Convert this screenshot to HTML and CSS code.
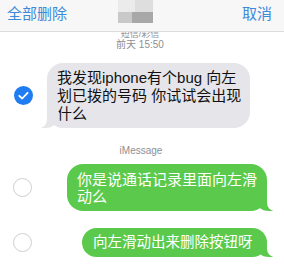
FILE: index.html
```html
<!DOCTYPE html>
<html lang="zh">
 <head>
  <meta charset="UTF-8">
  <meta name="viewport" content="width=device-width, initial-scale=1.0">
  <title>短信</title>
  <link rel="stylesheet" href="styles.css">
 </head>
<body>

<div class="kopf">
 <span class="knopf">全部删除</span>
 <div class="bild">
  <div class="bild-oben"></div>
  <div class="bild-unten"></div>
 </div>
 <span class="knopf rechts">取消</span>
</div>

<div class="info">
 <div class="info-typ">短信/彩信</div>
 <div class="info-zeit">前天 15:50</div>
</div>

<!-- Nachricht: empfangen -->
<div class="zeile">
 <div class="wahl">
  <svg width="19" height="19" viewBox="0 0 19 19">
   <circle cx="9.5" cy="9.5" r="9.5" fill="#1f7df1"/>
   <path d="M5.3 9.8 L8.2 12.5 L13.6 6.8" fill="none" stroke="#fff" stroke-width="1.8" stroke-linecap="round" stroke-linejoin="round"/>
  </svg>
 </div>
 <div class="blase grau">我发现iphone有个bug 向左<br>划已拨的号码 你试试会出现<br>什么</div>
</div>

<div class="info dienst">iMessage</div>

<!-- Nachrichten: gesendet -->
<div class="zeile eins">
 <div class="wahl"><span class="kreis"></span></div>
 <div class="blase gruen lang">你是说通话记录里面向左滑<br>动么</div>
</div>

<div class="zeile zwei">
 <div class="wahl"><span class="kreis"></span></div>
 <div class="blase gruen kurz">向左滑动出来删除按钮呀</div>
</div>

</body>
</html>
```

FILE: styles.css
```css
body {
 margin: 0;
 width: 284px;
 height: 266px;
 overflow: hidden;
 background: #FFFFFF;
 font-family: "Liberation Sans", "Noto Sans CJK SC", Sans-Serif;
}

/* Kopfleiste */
.kopf {
 position: relative;
 z-index: 1;
 display: grid;
 grid-template-columns: 1fr auto 1fr;
 align-items: start;
 height: 31px;
 padding: 0 12px 0 7px;
 background: #F7F7F8;
 border-bottom: 1px solid #DCDCDC;
}

.knopf {
 font-size: 15px;
 line-height: 27px;
 color: #3D8AD9;
}

.knopf.rechts {
 justify-self: end;
}

.bild {
 width: 35px;
 height: 23px;
 margin-right: 9px;
 filter: blur(0.6px);
}

.bild-oben {
 height: 12px;
 background: linear-gradient(90deg, #EBEBEB 50%, #DEDEDE 50%);
}

.bild-unten {
 height: 11px;
 background: linear-gradient(90deg, #C9C9C9 40%, #A8A8A8 40%);
}

/* Zeitangaben */
.info {
 text-align: center;
 color: #8E8E93;
 margin-top: -3px;
 padding-right: 4px;
}

.info-typ {
 font-size: 9px;
 line-height: 10px;
}

.info-zeit {
 font-size: 10px;
 line-height: 12px;
}

.info.dienst {
 margin-top: 17px;
 font-size: 10px;
 line-height: 12px;
 padding-right: 2px;
}

/* Zeilen */
.zeile {
 display: flex;
 align-items: center;
 margin-top: 12px;
}

.zeile.eins {
 margin-top: 7px;
}

.zeile.zwei {
 margin-top: 17px;
}

.wahl {
 width: 45px;
 display: flex;
 justify-content: center;
 padding-left: 1px;
}

.zeile.eins .wahl,
.zeile.zwei .wahl {
 padding-left: 0;
}

.kreis {
 width: 19px;
 height: 19px;
 border: 1px solid #CFCFCF;
 border-radius: 50%;
 box-sizing: border-box;
}

/* Blasen */
.blase {
 position: relative;
 font-size: 15px;
 border-radius: 16px;
 white-space: nowrap;
}

.blase.grau {
 width: 183px;
 margin-left: 1px;
 padding: 6px 10px 5px 10px;
 line-height: 18px;
 background: #E5E5EA;
 color: #111111;
}

.blase.gruen {
 margin-left: auto;
 margin-right: 17px;
 line-height: 17px;
 background: #5BCA4C;
 color: #FFFFFF;
}

.blase.lang {
 width: 180px;
 padding: 7px 10px 6px 10px;
}

.blase.kurz {
 width: 164px;
 padding: 6px 10px 6px 11px;
 font-size: 14.5px;
}

/* Zipfel */
.blase::before,
.blase::after {
 content: "";
 position: absolute;
 bottom: 0;
 height: 16px;
}

.blase.grau::before {
 left: -6px;
 width: 18px;
 background: #E5E5EA;
 border-bottom-right-radius: 14px 12px;
}

.blase.grau::after {
 left: -12px;
 width: 12px;
 background: #FFFFFF;
 border-bottom-right-radius: 8px;
}

.blase.gruen::before {
 right: -6px;
 width: 18px;
 background: #5BCA4C;
 border-bottom-left-radius: 14px 12px;
}

.blase.gruen::after {
 right: -12px;
 width: 12px;
 background: #FFFFFF;
 border-bottom-left-radius: 8px;
}
```
